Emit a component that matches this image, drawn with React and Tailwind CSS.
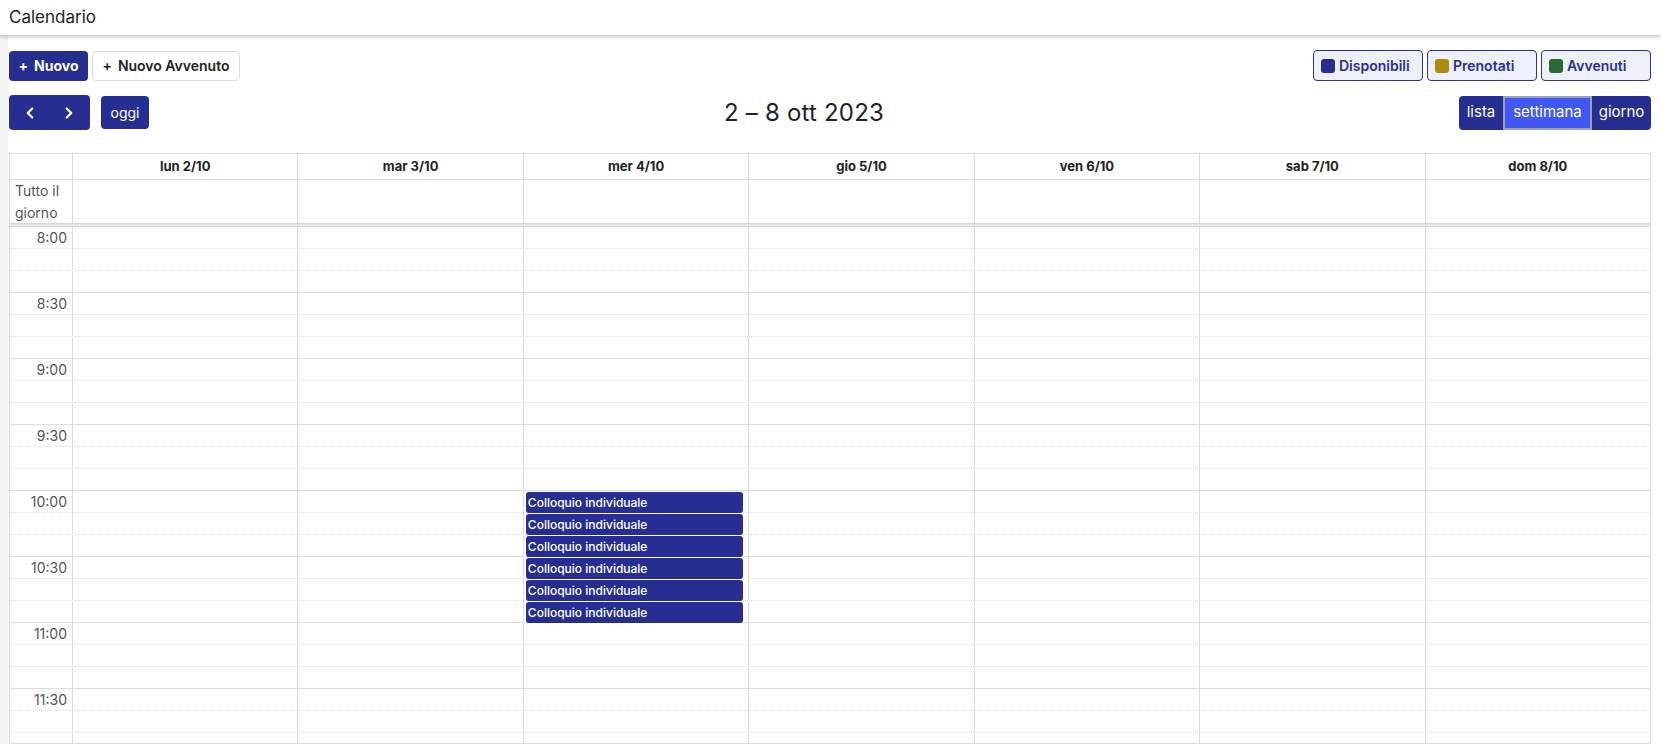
import { ChevronLeft, ChevronRight } from 'lucide-react'

const days = ['lun 2/10', 'mar 3/10', 'mer 4/10', 'gio 5/10', 'ven 6/10', 'sab 7/10', 'dom 8/10']

const legend = [
  { label: 'Disponibili', color: 'bg-[#27308f]' },
  { label: 'Prenotati', color: 'bg-[#b08a0c]' },
  { label: 'Avvenuti', color: 'bg-[#2a6a32]' },
]

// 10 minute slots starting at 8:00
const slots = Array.from({ length: 24 }, (_, i) => {
  const mins = 8 * 60 + i * 10
  const h = Math.floor(mins / 60)
  const m = mins % 60
  return { label: m % 30 === 0 ? `${h}:${m === 0 ? '00' : '30'}` : '', mins }
})

// events on mercoledì, 10:00 - 11:00
const eventStarts = [600, 610, 620, 630, 640, 650]

export default function App() {
  return (
    <div className="h-screen overflow-hidden bg-white text-[#222] font-['Inter','Noto_Sans',sans-serif] flex flex-col">
      {/* Top bar */}
      <div className="h-[35px] flex-shrink-0 flex items-center px-[9px] bg-white relative z-20 shadow-[0_2px_4px_rgba(0,0,0,0.22)]">
        <span className="text-[17px] leading-none">Calendario</span>
      </div>

      <div className="flex flex-1 min-h-0">
        <div className="w-[8px] bg-[#f4f4f4] flex-shrink-0" />
        <div className="flex-1 min-w-0 pl-[1px] pr-[10px] pt-[15px] flex flex-col">
          {/* Toolbar row 1 */}
          <div className="flex items-center justify-between h-[31px]">
            <div className="flex items-center gap-[4px]">
              <button className="h-[30px] w-[79px] rounded-[4px] bg-[#262f91] text-white text-[14px] font-bold flex items-center justify-center gap-[6px]">
                <span>+</span>
                <span>Nuovo</span>
              </button>
              <button className="h-[30px] w-[148px] rounded-[4px] bg-white border border-[#dcdcdc] text-[14px] font-semibold flex items-center justify-center gap-[6px]">
                <span>+</span>
                <span>Nuovo Avvenuto</span>
              </button>
            </div>
            <div className="flex items-center gap-[4px]">
              {legend.map(({ label, color }) => (
                <button
                  key={label}
                  className="h-[31px] w-[110px] rounded-[4px] border border-[#2b3590] bg-[#eef0fc] flex items-center gap-[4px] px-[7px] text-[14px] font-semibold text-[#27308f]"
                >
                  <span className={`w-[14px] h-[14px] rounded-[3px] ${color}`} />
                  {label}
                </button>
              ))}
            </div>
          </div>

          {/* Toolbar row 2 */}
          <div className="flex items-center justify-between mt-[14px] mb-[23px] h-[35px]">
            <div className="flex items-center gap-[11px]">
              <div className="flex h-[35px] w-[81px] rounded-[4px] bg-[#262f91] text-white">
                <button className="flex-1 flex items-center justify-center pl-[2px]">
                  <ChevronLeft size={18} strokeWidth={3} />
                </button>
                <button className="flex-1 flex items-center justify-center pr-[2px]">
                  <ChevronRight size={18} strokeWidth={3} />
                </button>
              </div>
              <button className="h-[33px] w-[48px] rounded-[4px] bg-[#262f91] text-white text-[14px] flex items-center justify-center">
                oggi
              </button>
            </div>
            <h2 className="text-[24px] leading-none tracking-[0.2px]">2 – 8 ott 2023</h2>
            <div className="flex h-[34px] rounded-[4px] overflow-hidden bg-[#262f91] text-white text-[15px]">
              <button className="w-[44px] flex items-center justify-center">lista</button>
              <button className="w-[89px] flex items-center justify-center bg-[#4157f4] border-2 border-[#9aa3b5]">settimana</button>
              <button className="w-[59px] flex items-center justify-center">giorno</button>
            </div>
          </div>

          {/* Calendar */}
          <div className="border border-[#dddddd] flex-1 min-h-0 overflow-hidden flex flex-col">
            {/* day header */}
            <div className="grid grid-cols-[62px_repeat(7,1fr)] h-[26px] border-b border-[#dddddd] flex-shrink-0">
              <div />
              {days.map(d => (
                <div key={d} className="border-l border-[#dddddd] flex items-center justify-center text-[13px] font-bold">
                  {d}
                </div>
              ))}
            </div>
            {/* all day */}
            <div className="grid grid-cols-[62px_repeat(7,1fr)] h-[43px] flex-shrink-0">
              <div className="text-[14px] leading-[22px] text-[#555] pl-[5px]">Tutto il giorno</div>
              {days.map(d => (
                <div key={d} className="border-l border-[#dddddd]" />
              ))}
            </div>
            <div className="h-[4px] bg-[#e6e6e6] border-y border-[#d6d6d6] flex-shrink-0" />
            {/* time grid */}
            <div className="flex-shrink-0">
              {slots.map(({ label, mins }, i) => {
                const solid = (i + 1) % 3 === 0
                return (
                  <div
                    key={mins}
                    className={`grid grid-cols-[62px_repeat(7,1fr)] h-[22px] border-b border-[#dddddd] ${solid ? 'border-solid' : 'border-dotted'}`}
                  >
                    <div className="text-right pr-[5px] text-[14px] leading-[22px] text-[#555]">{label}</div>
                    {days.map((d, di) => (
                      <div key={d} className="border-l border-solid border-[#dddddd] relative">
                        {di === 2 && eventStarts.includes(mins) && (
                          <div className="absolute z-10 top-[1px] left-[2px] right-[5px] h-[21px] rounded-[3px] bg-[#262f91] text-white text-[12px] font-medium leading-[21px] px-[2px] truncate">
                            Colloquio individuale
                          </div>
                        )}
                      </div>
                    ))}
                  </div>
                )
              })}
            </div>
          </div>
        </div>
      </div>
    </div>
  )
}
